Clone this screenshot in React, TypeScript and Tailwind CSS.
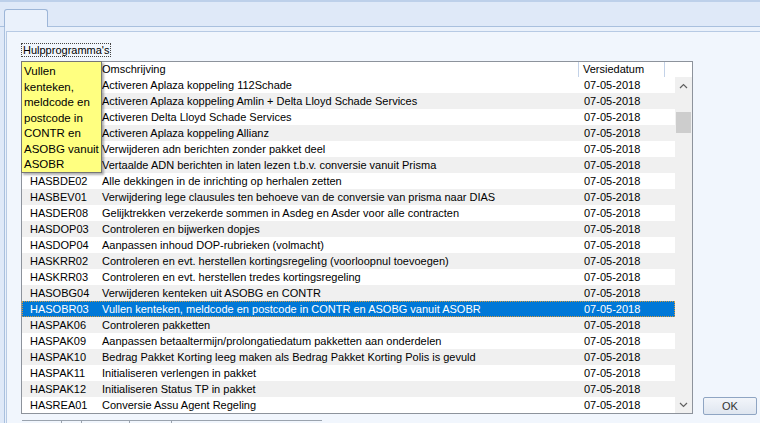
import React from 'react';

type Row = { code: string; desc: string; date: string };

// the first six codes sit under the tooltip and are not visible
const rows: Row[] = [
  { code: '', desc: 'Activeren Aplaza koppeling 112Schade', date: '07-05-2018' },
  { code: '', desc: 'Activeren Aplaza koppeling Amlin + Delta Lloyd Schade Services', date: '07-05-2018' },
  { code: '', desc: 'Activeren Delta Lloyd Schade Services', date: '07-05-2018' },
  { code: '', desc: 'Activeren Aplaza koppeling Allianz', date: '07-05-2018' },
  { code: '', desc: 'Verwijderen adn berichten zonder pakket deel', date: '07-05-2018' },
  { code: '', desc: 'Vertaalde ADN berichten in laten lezen t.b.v. conversie vanuit Prisma', date: '07-05-2018' },
  { code: 'HASBDE02', desc: 'Alle dekkingen in de inrichting op herhalen zetten', date: '07-05-2018' },
  { code: 'HASBEV01', desc: 'Verwijdering lege clausules ten behoeve van de conversie van prisma naar DIAS', date: '07-05-2018' },
  { code: 'HASDER08', desc: 'Gelijktrekken verzekerde sommen in Asdeg en Asder voor alle contracten', date: '07-05-2018' },
  { code: 'HASDOP03', desc: 'Controleren en bijwerken dopjes', date: '07-05-2018' },
  { code: 'HASDOP04', desc: 'Aanpassen inhoud DOP-rubrieken (volmacht)', date: '07-05-2018' },
  { code: 'HASKRR02', desc: 'Controleren en evt. herstellen kortingsregeling (voorloopnul toevoegen)', date: '07-05-2018' },
  { code: 'HASKRR03', desc: 'Controleren en evt. herstellen tredes kortingsregeling', date: '07-05-2018' },
  { code: 'HASOBG04', desc: 'Verwijderen kenteken uit ASOBG en CONTR', date: '07-05-2018' },
  { code: 'HASOBR03', desc: 'Vullen kenteken, meldcode en postcode in CONTR en ASOBG vanuit ASOBR', date: '07-05-2018' },
  { code: 'HASPAK06', desc: 'Controleren pakketten', date: '07-05-2018' },
  { code: 'HASPAK09', desc: 'Aanpassen betaaltermijn/prolongatiedatum pakketten aan onderdelen', date: '07-05-2018' },
  { code: 'HASPAK10', desc: 'Bedrag Pakket Korting leeg maken als Bedrag Pakket Korting Polis is gevuld', date: '07-05-2018' },
  { code: 'HASPAK11', desc: 'Initialiseren verlengen in pakket', date: '07-05-2018' },
  { code: 'HASPAK12', desc: 'Initialiseren Status TP in pakket', date: '07-05-2018' },
  { code: 'HASREA01', desc: 'Conversie Assu Agent Regeling', date: '07-05-2018' },
];

const selected = 'HASOBR03';

function Chevron({ up }: { up?: boolean }) {
  return (
    <svg width="9" height="6" viewBox="0 0 9 6">
      <polyline
        points={up ? '1,5 4.5,1.5 8,5' : '1,1 4.5,4.5 8,1'}
        fill="none"
        stroke="#606060"
        strokeWidth="1.2"
      />
    </svg>
  );
}

export default function App() {
  return (
    <div className="w-[760px] h-[423px] overflow-hidden flex flex-col bg-[#dfe9f8] font-['Liberation_Sans',Arial,sans-serif] text-[11px] text-black">
      {/* window top edge */}
      <div className="h-[2px] bg-[#bdd0ea]" />

      {/* tab strip */}
      <div className="h-[25px] flex items-end pl-[4px] border-b border-[#a9c0de] bg-[#dfe9f8]">
        <div className="w-[44px] h-[18px] -mb-px border border-b-0 border-[#9db6d8] rounded-t-[3px] bg-[#eaf1fb]" />
      </div>

      {/* tab page */}
      <div className="flex-1 flex ml-[4px] border-l border-[#a9c0de] bg-[#eaf1fb] pt-[4px] pl-[1px]">
        <div className="flex-1 flex flex-col border-l border-t border-[#b7cae4] bg-[#f1f6fd] pl-[14px] pt-[11px]">
          <div className="self-start h-[14px] px-[1px] border border-dotted border-[#444] leading-[12px] mb-[4px]">
            Hulpprogramma's
          </div>

          <div className="flex items-end gap-[10px]">
            {/* list view */}
            <div className="relative w-[672px] h-[353px] border border-[#8d939c] bg-white flex flex-col">
              <div className="h-[15px] flex leading-[15px] bg-white">
                <div className="w-[78px] border-r border-[#d5dfee]" />
                <div className="w-[479px] pl-[2px] border-r border-[#c3d2e8]">Omschrijving</div>
                <div className="w-[86px] pl-[4px] border-r border-[#c3d2e8]">Versiedatum</div>
                <div className="flex-1" />
              </div>

              <div className="flex-1 flex">
                <div className="w-[653px] flex flex-col">
                  {rows.map((r, i) => {
                    const isSel = r.code === selected;
                    return (
                      <div
                        key={r.desc}
                        className={
                          isSel
                            ? 'h-[16px] flex leading-[14px] bg-[#0078d7] text-white border border-dotted border-[#d59a3c]'
                            : i % 2 === 1
                              ? 'h-[16px] flex leading-[16px] bg-[#f0f0f0]'
                              : 'h-[16px] flex leading-[16px] bg-white'
                        }
                      >
                        <div className={isSel ? 'w-[77px] pl-[7px]' : 'w-[78px] pl-[8px]'}>{r.code}</div>
                        <div className="w-[479px] pl-[2px] whitespace-nowrap overflow-hidden">{r.desc}</div>
                        <div className="flex-1 pl-[5px]">{r.date}</div>
                      </div>
                    );
                  })}
                </div>

                {/* vertical scrollbar */}
                <div className="w-[17px] flex flex-col bg-[#f0f0f0]">
                  <div className="h-[17px] flex items-center justify-center">
                    <Chevron up />
                  </div>
                  <div className="flex-1">
                    <div className="mt-[18px] ml-[1px] w-[15px] h-[21px] bg-[#cdcdcd]" />
                  </div>
                  <div className="h-[17px] flex items-center justify-center">
                    <Chevron />
                  </div>
                </div>
              </div>

              {/* tooltip */}
              <div className="absolute -left-px -top-px w-[81px] h-[112px] border border-[#767676] bg-[#ffff80] pl-[2px] pt-[2px] text-[11.5px] leading-[15.5px] shadow-[2px_2px_2px_rgba(0,0,0,0.3)]">
                Vullen
                <br />
                kenteken,
                <br />
                meldcode en
                <br />
                postcode in
                <br />
                CONTR en
                <br />
                ASOBG vanuit
                <br />
                ASOBR
              </div>
            </div>

            <button className="w-[54px] h-[18px] -mb-px border border-[#8fa5c3] rounded-[2px] bg-gradient-to-b from-[#f2f5fa] to-[#dfe6f0] text-[#333] text-[11px] leading-[16px]">
              OK
            </button>
          </div>

          {/* edge of the control below */}
          <div className="mt-[6px] ml-px w-[300px] h-[3px] border-t border-[#9aa3ae] flex">
            <div className="w-[40px] border-r border-[#9aa3ae]" />
            <div className="w-[20px] border-r border-[#9aa3ae]" />
            <div className="w-[48px] border-r border-[#9aa3ae]" />
            <div className="w-[42px] border-r border-[#9aa3ae]" />
          </div>
        </div>
      </div>
    </div>
  );
}
